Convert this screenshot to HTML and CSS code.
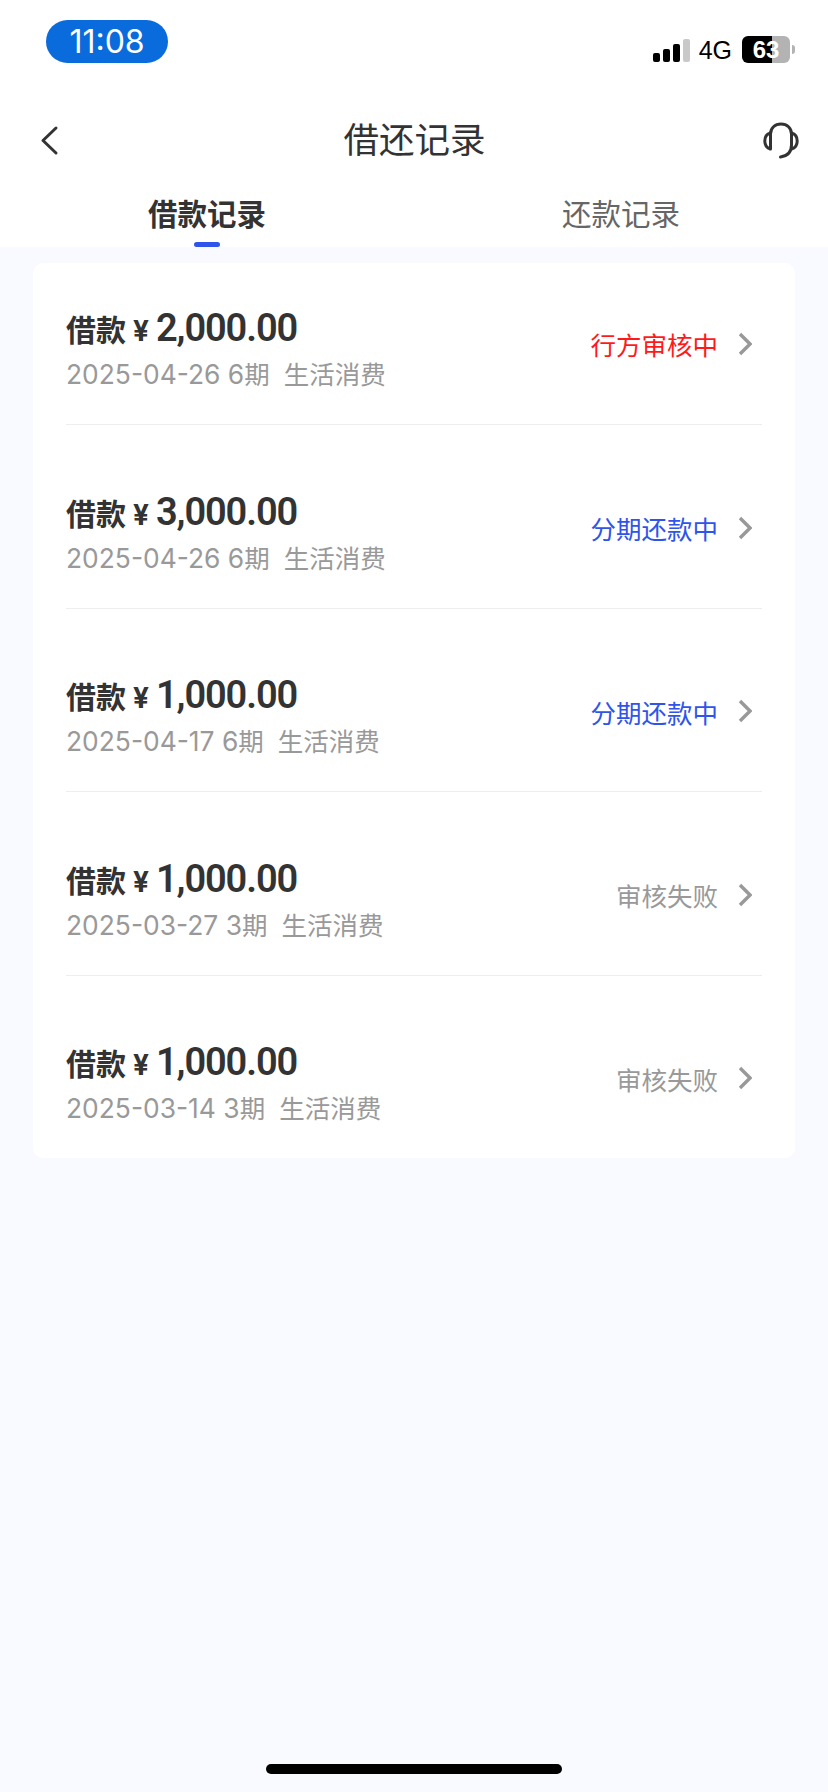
FILE: index.html
```html
<!DOCTYPE html>
<html>
<head>
    <meta charset="utf-8">
    <meta name="viewport" content="width=device-width, initial-scale=1.0">
    <title>借还记录</title>
    <link rel="stylesheet" href="styles.css">
</head>
<body>
    <header class="top">
        <div class="statusbar">
            <span class="time">11:08</span>
            <div class="status-right">
                <div class="signal">
                    <i class="bar1"></i><i class="bar2"></i><i class="bar3"></i><i class="bar4"></i>
                </div>
                <span class="net">4G</span>
                <div class="battery"><span>63</span></div>
                <i class="battery-cap"></i>
            </div>
        </div>
        <div class="navbar">
            <svg class="nav-back" width="24" height="32" viewBox="0 0 24 32">
                <path d="M18 4 L5 16.500 L18 29" fill="none" stroke="#333" stroke-width="3" stroke-linecap="round" stroke-linejoin="round"/>
            </svg>
            <h1>借还记录</h1>
            <svg class="nav-service" width="36" height="38" viewBox="0 0 36 38">
                <path d="M7.500 28 V13 C7.500 7 12 3 18 3 C24 3 28.500 7 28.500 13 V24 C28.500 31 24 35 17.500 36" fill="none" stroke="#333" stroke-width="3" stroke-linecap="round"/>
                <path d="M7.500 12 C3.500 13 1.800 16 1.800 20 C1.800 24 3.500 27 7.500 28" fill="none" stroke="#333" stroke-width="3"/>
                <path d="M28.500 12 C32.500 13 34.200 16 34.200 20 C34.200 24 32.500 27 28.500 28" fill="none" stroke="#333" stroke-width="3"/>
            </svg>
        </div>
        <nav class="tabs">
            <a class="tab active">借款记录</a>
            <a class="tab">还款记录</a>
        </nav>
    </header>

    <main>
        <section class="card">
            <div class="row first">
                <div class="info">
                    <div class="amount">借款<span class="yen">¥</span><span class="num">2,000.00</span></div>
                    <div class="meta"><span class="date">2025-04-26 6</span>期<span class="purpose">生活消费</span></div>
                </div>
                <span class="state red">行方审核中</span>
                <svg class="arrow" width="14" height="24" viewBox="0 0 14 24"><path d="M2 2 L12 12 L2 22" fill="none" stroke="#999" stroke-width="3.400"/></svg>
            </div>
            <div class="row">
                <div class="info">
                    <div class="amount">借款<span class="yen">¥</span><span class="num">3,000.00</span></div>
                    <div class="meta"><span class="date">2025-04-26 6</span>期<span class="purpose">生活消费</span></div>
                </div>
                <span class="state blue">分期还款中</span>
                <svg class="arrow" width="14" height="24" viewBox="0 0 14 24"><path d="M2 2 L12 12 L2 22" fill="none" stroke="#999" stroke-width="3.400"/></svg>
            </div>
            <div class="row">
                <div class="info">
                    <div class="amount">借款<span class="yen">¥</span><span class="num">1,000.00</span></div>
                    <div class="meta"><span class="date">2025-04-17 6</span>期<span class="purpose">生活消费</span></div>
                </div>
                <span class="state blue">分期还款中</span>
                <svg class="arrow" width="14" height="24" viewBox="0 0 14 24"><path d="M2 2 L12 12 L2 22" fill="none" stroke="#999" stroke-width="3.400"/></svg>
            </div>
            <div class="row">
                <div class="info">
                    <div class="amount">借款<span class="yen">¥</span><span class="num">1,000.00</span></div>
                    <div class="meta"><span class="date">2025-03-27 3</span>期<span class="purpose">生活消费</span></div>
                </div>
                <span class="state gray">审核失败</span>
                <svg class="arrow" width="14" height="24" viewBox="0 0 14 24"><path d="M2 2 L12 12 L2 22" fill="none" stroke="#999" stroke-width="3.400"/></svg>
            </div>
            <div class="row last">
                <div class="info">
                    <div class="amount">借款<span class="yen">¥</span><span class="num">1,000.00</span></div>
                    <div class="meta"><span class="date">2025-03-14 3</span>期<span class="purpose">生活消费</span></div>
                </div>
                <span class="state gray">审核失败</span>
                <svg class="arrow" width="14" height="24" viewBox="0 0 14 24"><path d="M2 2 L12 12 L2 22" fill="none" stroke="#999" stroke-width="3.400"/></svg>
            </div>
        </section>
    </main>

    <div class="home-bar"></div>
</body>
</html>
```

FILE: styles.css
```css
* {
    box-sizing: border-box;
}

html, body {
    height: 100%;
}

body {
    margin: 0;
    height: 1792px;
    display: flex;
    flex-direction: column;
    background: #f9faff;
    color: #333;
    font-family: "Inter", "Noto Sans CJK SC", sans-serif;
}

/* top area */
.top {
    height: 247px;
    background: #fff;
}

.statusbar {
    height: 110px;
    padding: 20px 33px 0 46px;
    display: flex;
    justify-content: space-between;
    align-items: flex-start;
}

.time {
    width: 122px;
    height: 43px;
    border-radius: 22px;
    background: #0a6bdc;
    color: #fff;
    font-size: 32px;
    line-height: 43px;
    text-align: center;
    font-family: "Inter", sans-serif;
}

.status-right {
    display: flex;
    align-items: center;
    margin-top: 16px;
    color: #000;
}

.signal {
    display: flex;
    align-items: flex-end;
    gap: 3px;
    height: 24px;
}

.signal i {
    display: block;
    width: 7px;
    background: #000;
    border-radius: 2px;
}

.signal .bar1 { height: 9px; }
.signal .bar2 { height: 13px; }
.signal .bar3 { height: 18px; }
.signal .bar4 { height: 23px; background: #c9c9c9; }

.net {
    margin-left: 9px;
    font-size: 25px;
    line-height: 24px;
    font-family: "Liberation Sans", sans-serif;
}

.battery {
    width: 48px;
    height: 27px;
    margin-left: 10px;
    border-radius: 6px;
    background: linear-gradient(to right, #000 63%, #b3b3b3 63%);
    color: #fff;
    font-size: 24px;
    font-weight: 700;
    line-height: 27px;
    text-align: center;
    font-family: "Liberation Sans", sans-serif;
}

.battery-cap {
    display: block;
    width: 3px;
    height: 9px;
    margin-left: 2px;
    border-radius: 0 3px 3px 0;
    background: #b3b3b3;
}

.navbar {
    height: 60px;
    padding: 0 29px 0 30px;
    display: grid;
    grid-template-columns: 1fr auto 1fr;
    align-items: center;
}

.nav-back {
    margin-left: 8px;
}

.nav-service {
    justify-self: end;
}

.navbar h1 {
    margin: 2px 0 0;
    font-size: 35.500px;
    font-weight: 400;
    line-height: 50px;
}

.tabs {
    height: 77px;
    display: flex;
}

.tab {
    position: relative;
    flex: 1;
    padding-top: 24px;
    font-size: 29.500px;
    line-height: 40px;
    text-align: center;
    color: #666;
}

.tab.active {
    color: #333;
    font-weight: 700;
}

.tab.active::after {
    content: "";
    position: absolute;
    left: 50%;
    bottom: 0;
    width: 26px;
    height: 5px;
    margin-left: -13px;
    border-radius: 3px;
    background: #2f54eb;
}

/* record list */
main {
    flex: 1;
    padding: 16px 33px 0;
}

.card {
    background: #fff;
    border-radius: 10px;
    padding: 0 33px;
}

.row {
    display: flex;
    align-items: center;
    height: 183.500px;
    padding-top: 23px;
    border-bottom: 1px solid #eee;
}

.row.first {
    height: 162px;
    padding-top: 0;
}

.row.last {
    height: 182px;
    border-bottom: 0;
}

.info {
    flex: 1;
    margin-top: 10px;
}

.amount {
    display: flex;
    align-items: baseline;
    height: 46px;
    font-size: 30px;
    font-weight: 700;
    line-height: 46px;
}

.yen {
    margin-left: 7px;
    margin-right: 7px;
    font-size: 28px;
}

.num {
    font-family: "Roboto", sans-serif;
    font-size: 38px;
    font-weight: 600;
    letter-spacing: -1.100px;
}

.meta {
    margin-top: 5px;
    font-size: 25.500px;
    line-height: 36px;
    color: #999;
}

.date {
    font-size: 26.400px;
}

.purpose {
    margin-left: 14px;
}

.state {
    font-size: 25.500px;
    margin-right: 20px;
}

.red { color: #ff1a1a; }
.blue { color: #2f54eb; }
.gray { color: #999; }

.arrow {
    margin-right: 10px;
}

.home-bar {
    position: fixed;
    left: 266px;
    bottom: 18px;
    width: 296px;
    height: 10px;
    border-radius: 5px;
    background: #000;
}
```
